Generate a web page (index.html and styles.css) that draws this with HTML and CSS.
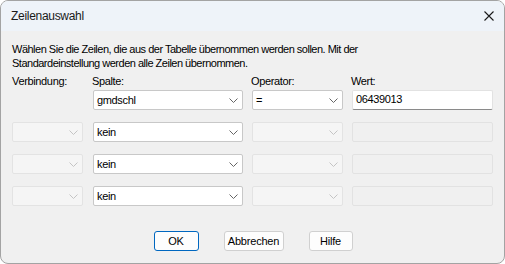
FILE: index.html
```html
<!DOCTYPE html>
<html>
<head>
  <link rel="stylesheet" href="styles.css">
</head>
<body>
  <div class="window">
    <div class="titlebar">
      <span class="title">Zeilenauswahl</span>
      <svg class="close" width="10" height="10" viewBox="0 0 10 10">
        <path d="M0.5 0.5 L9.5 9.5 M9.5 0.5 L0.5 9.5" stroke="#1a1a1a" stroke-width="1.1" fill="none"/>
      </svg>
    </div>

    <div class="content">
      <p class="intro">Wählen Sie die Zeilen, die aus der Tabelle übernommen werden sollen. Mit der<br>Standardeinstellung werden alle Zeilen übernommen.</p>

      <div class="grid labels">
        <div class="label">Verbindung:</div>
        <div class="label">Spalte:</div>
        <div class="label">Operator:</div>
        <div class="label">Wert:</div>
      </div>

      <div class="grid rows">
        <!-- row 1 -->
        <div class="spacer"></div>
        <div class="combo"><span>gmdschl</span><svg class="chev" width="9" height="5" viewBox="0 0 9 5"><path d="M0.5 0.5 L4.5 4.5 L8.5 0.5" stroke="#666" fill="none"/></svg></div>
        <div class="combo"><span>=</span><svg class="chev" width="9" height="5" viewBox="0 0 9 5"><path d="M0.5 0.5 L4.5 4.5 L8.5 0.5" stroke="#666" fill="none"/></svg></div>
        <div class="field">06439013</div>

        <!-- row 2 -->
        <div class="combo off"><span></span><svg class="chev" width="9" height="5" viewBox="0 0 9 5"><path d="M0.5 0.5 L4.5 4.5 L8.5 0.5" stroke="#c4c4c4" fill="none"/></svg></div>
        <div class="combo"><span>kein</span><svg class="chev" width="9" height="5" viewBox="0 0 9 5"><path d="M0.5 0.5 L4.5 4.5 L8.5 0.5" stroke="#666" fill="none"/></svg></div>
        <div class="combo off"><span></span><svg class="chev" width="9" height="5" viewBox="0 0 9 5"><path d="M0.5 0.5 L4.5 4.5 L8.5 0.5" stroke="#c4c4c4" fill="none"/></svg></div>
        <div class="field off"></div>

        <!-- row 3 -->
        <div class="combo off"><span></span><svg class="chev" width="9" height="5" viewBox="0 0 9 5"><path d="M0.5 0.5 L4.5 4.5 L8.5 0.5" stroke="#c4c4c4" fill="none"/></svg></div>
        <div class="combo"><span>kein</span><svg class="chev" width="9" height="5" viewBox="0 0 9 5"><path d="M0.5 0.5 L4.5 4.5 L8.5 0.5" stroke="#666" fill="none"/></svg></div>
        <div class="combo off"><span></span><svg class="chev" width="9" height="5" viewBox="0 0 9 5"><path d="M0.5 0.5 L4.5 4.5 L8.5 0.5" stroke="#c4c4c4" fill="none"/></svg></div>
        <div class="field off"></div>

        <!-- row 4 -->
        <div class="combo off"><span></span><svg class="chev" width="9" height="5" viewBox="0 0 9 5"><path d="M0.5 0.5 L4.5 4.5 L8.5 0.5" stroke="#c4c4c4" fill="none"/></svg></div>
        <div class="combo"><span>kein</span><svg class="chev" width="9" height="5" viewBox="0 0 9 5"><path d="M0.5 0.5 L4.5 4.5 L8.5 0.5" stroke="#666" fill="none"/></svg></div>
        <div class="combo off"><span></span><svg class="chev" width="9" height="5" viewBox="0 0 9 5"><path d="M0.5 0.5 L4.5 4.5 L8.5 0.5" stroke="#c4c4c4" fill="none"/></svg></div>
        <div class="field off"></div>
      </div>

      <div class="buttons">
        <button class="btn default ok">OK</button>
        <button class="btn cancel">Abbrechen</button>
        <button class="btn help">Hilfe</button>
      </div>
    </div>
  </div>
</body>
</html>
```

FILE: styles.css
```css
html, body {
  margin: 0;
  padding: 0;
  background: #ffffff;
}

body {
  font-family: "Liberation Sans", Arial, sans-serif;
  font-size: 11px;
  letter-spacing: -0.35px;
  color: #000;
}

.window {
  width: 505px;
  height: 264px;
  box-sizing: border-box;
  border: 1px solid #a3a3a3;
  border-radius: 8px;
  overflow: hidden;
  background: #f0f0f0;
}

.titlebar {
  height: 30px;
  background: #eef3f9;
  display: flex;
  align-items: center;
  justify-content: space-between;
  padding: 0 10px 0 10px;
}

.title {
  font-size: 12px;
  letter-spacing: -0.3px;
  color: #1a1a1a;
}

.close {
  margin-bottom: 1px;
}

.content {
  padding: 11px 10px 0 11px;
}

.intro {
  margin: 0;
  line-height: 14px;
  letter-spacing: -0.5px;
  white-space: nowrap;
}

/* four columns shared by the labels and the rows */
.grid {
  display: grid;
  grid-template-columns: 72px 150px 91px 141px;
  column-gap: 9px;
}

.labels {
  margin-top: 4px;
  height: 16px;
}

.label {
  line-height: 14px;
}

.labels .label + .label {
  margin-left: -1px;
}

.rows {
  grid-auto-rows: 20px;
  row-gap: 12px;
}

.spacer {
  height: 20px;
}

.combo {
  box-sizing: border-box;
  height: 20px;
  background: #ffffff;
  border: 1px solid #c8c8c8;
  border-radius: 2px;
  display: flex;
  align-items: center;
  justify-content: space-between;
  padding: 0 4px 0 3px;
}

.rows > :nth-child(4n+1) {
  width: 71px;
}

.combo span {
  line-height: 16px;
}

.combo.off {
  background: #f5f5f5;
  border-color: #e3e3e3;
}

.field {
  box-sizing: border-box;
  height: 20px;
  background: #ffffff;
  border: 1px solid #e2e2e2;
  border-bottom-color: #8a8a8a;
  border-radius: 2px;
  padding: 0 3px;
  line-height: 17px;
}

.field.off {
  background: #f0f0f0;
  border-color: #e2e2e2;
}

.buttons {
  display: flex;
  justify-content: center;
  gap: 25px;
  margin-top: 25px;
}

.btn {
  box-sizing: border-box;
  height: 20px;
  padding: 0;
  font-family: "Liberation Sans", Arial, sans-serif;
  font-size: 11px;
  letter-spacing: -0.2px;
  color: #000;
  background: #fdfdfd;
  border: 1px solid #d0d0d0;
  border-radius: 3px;
}

.btn.ok {
  width: 45px;
}

.btn.cancel {
  width: 60px;
}

.btn.help {
  width: 44px;
}

.btn.default {
  border-color: #0067c0;
}
```
